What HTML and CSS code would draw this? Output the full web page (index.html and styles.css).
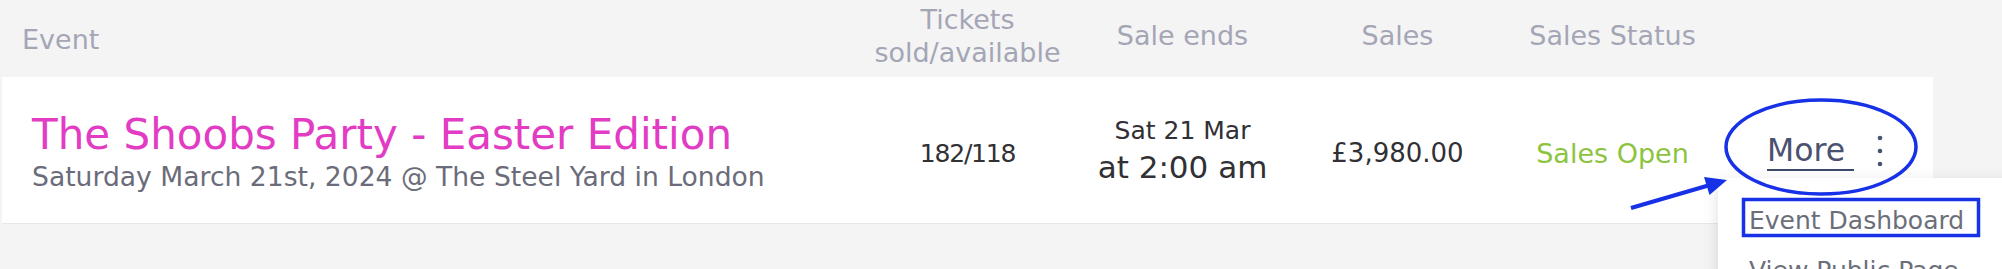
FILE: index.html
```html
<!DOCTYPE html>
<html lang="en">
<head>
<meta charset="utf-8">
<title>Events</title>
<link rel="stylesheet" href="styles.css">
</head>
<body>
<div class="page">
  <div class="thead">
    <div class="th th-event">Event</div>
    <div class="th th-two">Tickets<br>sold/available</div>
    <div class="th">Sale ends</div>
    <div class="th">Sales</div>
    <div class="th">Sales Status</div>
    <div class="th"></div>
  </div>
  <div class="card">
    <div class="cell cell-event">
      <div class="title">The Shoobs Party - Easter Edition</div>
      <div class="subtitle">Saturday March 21st, 2024 @ The Steel Yard in London</div>
    </div>
    <div class="cell value tickets">182/118</div>
    <div class="cell sale-ends">
      <div class="date">Sat 21 Mar</div>
      <div class="time">at 2:00 am</div>
    </div>
    <div class="cell value">£3,980.00</div>
    <div class="cell status">Sales Open</div>
    <div class="cell more">
      <span class="more-link">More</span>
      <svg class="dots" width="6" height="32" viewBox="0 0 6 32"><circle cx="3" cy="3" r="2.3"/><circle cx="3" cy="16" r="2.3"/><circle cx="3" cy="29" r="2.3"/></svg>
    </div>
  </div>
  <div class="dropdown">
    <div class="dd-item">Event Dashboard</div>
    <div class="dd-item">View Public Page</div>
  </div>
  <svg class="annot" width="2002" height="269" viewBox="0 0 2002 269">
    <ellipse cx="1821" cy="147" rx="95" ry="47" fill="none" stroke="#1631e6" stroke-width="3.5"/>
    <rect x="1743.5" y="199.5" width="235" height="36" fill="none" stroke="#1631e6" stroke-width="3.5"/>
    <line x1="1631" y1="208" x2="1710" y2="185" stroke="#1631e6" stroke-width="4"/>
    <polygon points="1727,180 1704,177 1709.5,195" fill="#1631e6"/>
  </svg>
</div>
</body>
</html>
```

FILE: styles.css
```css
html, body {
  margin: 0;
  padding: 0;
  background: #f4f4f5;
}
body {
  font-family: "DejaVu Sans", "Liberation Sans", sans-serif;
  width: 2002px;
  height: 269px;
  overflow: hidden;
}
.page {
  position: relative;
  width: 2002px;
  height: 269px;
  overflow: hidden;
}
.thead {
  display: grid;
  grid-template-columns: 860px 215px 215px 215px 215px 1fr;
  height: 77px;
  box-sizing: border-box;
  padding-bottom: 6px;
  align-items: center;
}
.th {
  color: #a4a6b6;
  font-size: 27px;
  line-height: 33px;
  text-align: center;
}
.th-event {
  text-align: left;
  padding-left: 22px;
  padding-top: 8px;
}
.card {
  margin-left: 2px;
  width: 1931px;
  height: 146px;
  background: #fff;
  box-shadow: 0 1px 0 #e7e7ea;
  display: grid;
  grid-template-columns: 858px 215px 215px 215px 215px 1fr;
  align-items: center;
}
.cell {
  text-align: center;
}
.cell-event {
  text-align: left;
  padding-left: 30px;
  padding-top: 6px;
}
.title {
  color: #e33cc4;
  font-size: 42px;
  line-height: 48px;
}
.subtitle {
  color: #6b6c7a;
  font-size: 26.6px;
  line-height: 36px;
}
.value {
  color: #303035;
  font-size: 26px;
  padding-top: 6px;
}
.tickets {
  font-size: 25px;
  letter-spacing: -1.2px;
}
.sale-ends {
  color: #303035;
}
.date {
  font-size: 25px;
  line-height: 34px;
}
.time {
  font-size: 31px;
  line-height: 38px;
}
.status {
  color: #8cc43f;
  font-size: 27px;
  padding-top: 6px;
}
.more {
  display: flex;
  align-items: center;
  justify-content: flex-start;
  gap: 23px;
  padding-left: 47px;
  padding-top: 2px;
}
.more-link {
  color: #4a5270;
  font-size: 31.5px;
  line-height: 38px;
  padding-right: 9px;
  border-bottom: 2px solid #3d4a6b;
}
.dots {
  fill: #4a5270;
}
.dropdown {
  position: absolute;
  left: 1718px;
  top: 178px;
  width: 320px;
  height: 140px;
  background: #fff;
  box-shadow: 0 4px 14px rgba(0, 0, 0, 0.13);
  padding-top: 18px;
  box-sizing: border-box;
}
.dd-item {
  color: #6b6f7a;
  font-size: 25px;
  line-height: 50px;
  padding-left: 31px;
}
.annot {
  position: absolute;
  left: 0;
  top: 0;
  pointer-events: none;
}
```
